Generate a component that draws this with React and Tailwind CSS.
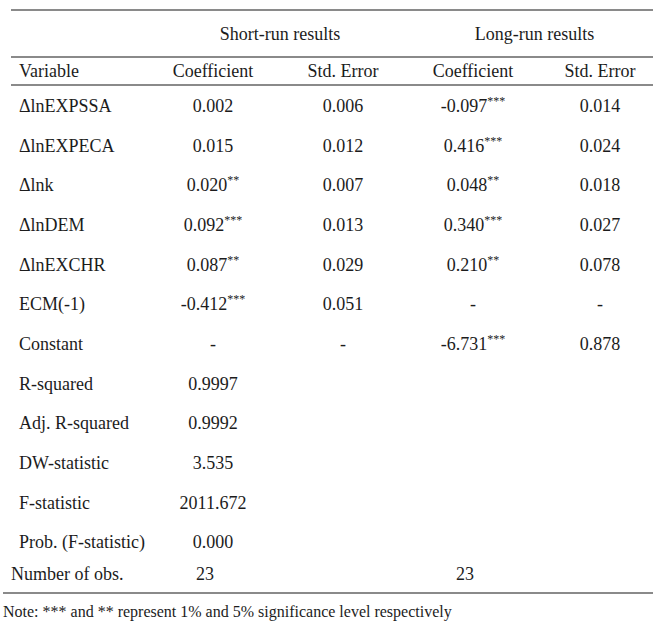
import React from 'react'

const rows = [
  ['ΔlnEXPSSA', ['0.002', ''], '0.006', ['-0.097', '***'], '0.014'],
  ['ΔlnEXPECA', ['0.015', ''], '0.012', ['0.416', '***'], '0.024'],
  ['Δlnk', ['0.020', '**'], '0.007', ['0.048', '**'], '0.018'],
  ['ΔlnDEM', ['0.092', '***'], '0.013', ['0.340', '***'], '0.027'],
  ['ΔlnEXCHR', ['0.087', '**'], '0.029', ['0.210', '**'], '0.078'],
  ['ECM(-1)', ['-0.412', '***'], '0.051', ['-', ''], '-'],
  ['Constant', ['-', ''], '-', ['-6.731', '***'], '0.878'],
]

const stats = [
  ['R-squared', '0.9997'],
  ['Adj. R-squared', '0.9992'],
  ['DW-statistic', '3.535'],
  ['F-statistic', '2011.672'],
  ['Prob. (F-statistic)', '0.000'],
]

const grid = 'grid grid-cols-[150px_126px_134px_126px_119px] items-center'

function Coef({ v }) {
  return (
    <span>
      {v[0]}
      {v[1] && <span className="text-[12px] relative top-[-7px]">{v[1]}</span>}
    </span>
  )
}

function Rule({ className = '' }) {
  return <div className={`h-[2px] bg-[#8a8a8a] ${className}`} />
}

export default function App() {
  return (
    <div
      className="w-[655px] h-[635px] bg-white text-[#1c1c1c] text-[18px] leading-none"
      style={{ fontFamily: '"Liberation Serif", "Times New Roman", serif' }}
    >
      <div className="pt-[9px]">
        <Rule className="ml-[11px] w-[642px]" />
        <div className={`${grid} h-[45px]`}>
          <div />
          <div className="col-span-2 text-center">Short-run results</div>
          <div className="col-span-2 text-center pl-[4px]">Long-run results</div>
        </div>
        <Rule className="ml-[11px] w-[642px]" />
        <div className={`${grid} h-[26px]`}>
          <div className="pl-[19px]">Variable</div>
          <div className="text-center">Coefficient</div>
          <div className="text-center">Std. Error</div>
          <div className="text-center">Coefficient</div>
          <div className="text-center pl-[9px]">Std. Error</div>
        </div>
        <Rule className="ml-[11px] w-[642px]" />

        {rows.map(r => (
          <div key={r[0]} className={`${grid} h-[39.7px]`}>
            <div className="pl-[19px]">{r[0]}</div>
            <div className="text-center"><Coef v={r[1]} /></div>
            <div className="text-center">{r[2]}</div>
            <div className="text-center"><Coef v={r[3]} /></div>
            <div className="text-center pl-[9px]">{r[4]}</div>
          </div>
        ))}

        {stats.map(s => (
          <div key={s[0]} className={`${grid} h-[39.7px]`}>
            <div className="pl-[19px]">{s[0]}</div>
            <div className="text-center">{s[1]}</div>
          </div>
        ))}

        <div className={`${grid} h-[24px]`}>
          <div className="pl-[11px]">Number of obs.</div>
          <div className="text-center pr-[16px]">23</div>
          <div />
          <div className="text-center pr-[16px]">23</div>
        </div>
        <Rule className="ml-[3px] w-[650px] mt-[6px]" />
        <div className="pl-[3px] pt-[10px] text-[16px]">
          Note: *** and ** represent 1% and 5% significance level respectively
        </div>
      </div>
    </div>
  )
}
